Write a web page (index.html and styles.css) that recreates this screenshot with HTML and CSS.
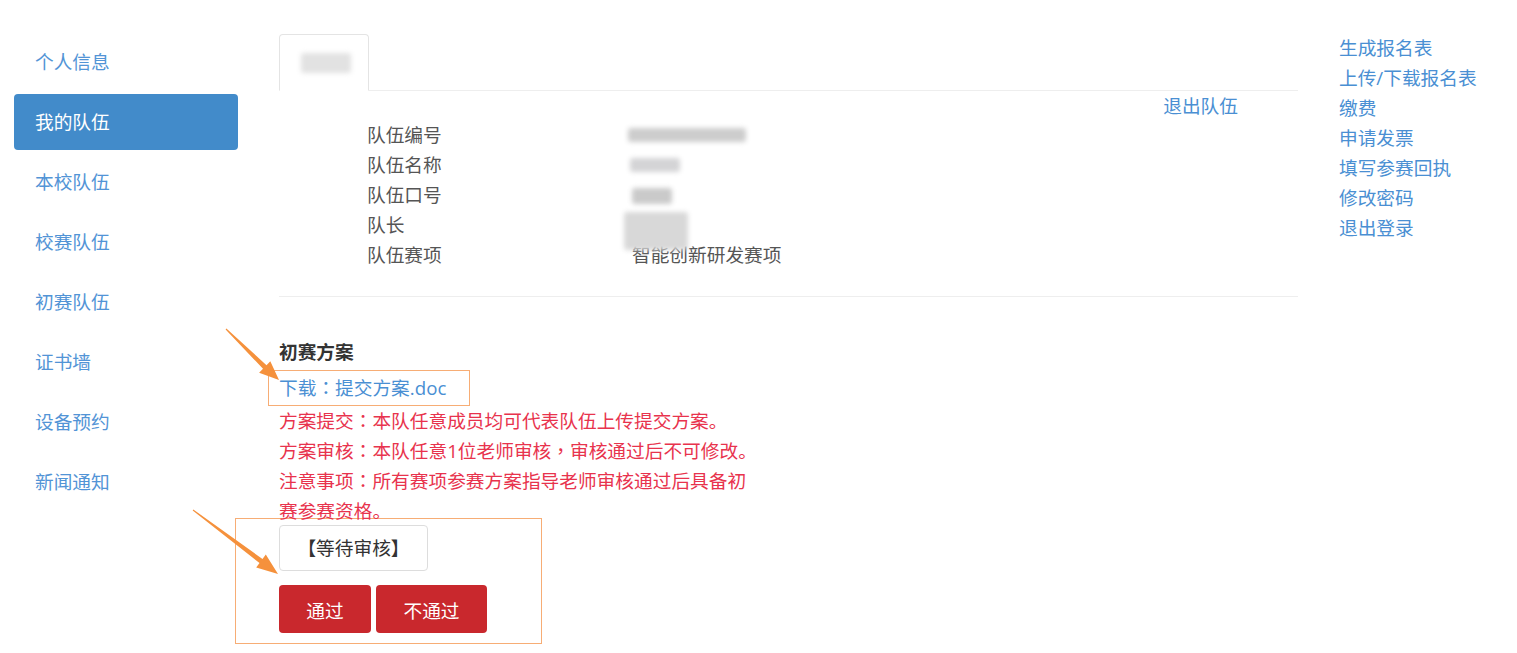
FILE: index.html
```html
<!DOCTYPE html>
<html lang="zh">
<head>
<meta charset="utf-8">
<title>我的队伍</title>
<link rel="stylesheet" href="styles.css">
</head>
<body>
<div class="page">
  <nav class="sidenav">
    <a class="nav-item">个人信息</a>
    <a class="nav-item active">我的队伍</a>
    <a class="nav-item">本校队伍</a>
    <a class="nav-item">校赛队伍</a>
    <a class="nav-item">初赛队伍</a>
    <a class="nav-item">证书墙</a>
    <a class="nav-item">设备预约</a>
    <a class="nav-item">新闻通知</a>
  </nav>

  <main class="main">
    <div class="tabs">
      <div class="tab"><span class="blur blur-tab"></span></div>
    </div>
    <div class="exit-row"><a class="link">退出队伍</a></div>
    <div class="info">
      <div class="info-row"><span class="label">队伍编号</span><span class="value"><span class="blur blur-1"></span></span></div>
      <div class="info-row"><span class="label">队伍名称</span><span class="value"><span class="blur blur-2"></span></span></div>
      <div class="info-row"><span class="label">队伍口号</span><span class="value"><span class="blur blur-3"></span></span></div>
      <div class="info-row"><span class="label">队长</span><span class="value"><span class="blur blur-4"></span></span></div>
      <div class="info-row"><span class="label">队伍赛项</span><span class="value">智能创新研发赛项</span></div>
    </div>
    <hr class="divider">
    <section class="plan">
      <h4 class="plan-title">初赛方案</h4>
      <a class="download">下载<span class="punct" lang="zh-Hant">：</span>提交方案.doc</a>
      <p class="notice">方案提交<span class="punct" lang="zh-Hant">：</span>本队任意成员均可代表队伍上传提交方案。<br>方案审核<span class="punct" lang="zh-Hant">：</span>本队任意1位老师审核<span class="punct" lang="zh-Hant">，</span>审核通过后不可修改。<br>注意事项<span class="punct" lang="zh-Hant">：</span>所有赛项参赛方案指导老师审核通过后具备初赛参赛资格。</p>
      <div class="review">
        <div class="status">【等待审核】</div>
        <div class="actions">
          <button class="btn btn-pass">通过</button>
          <button class="btn btn-fail">不通过</button>
        </div>
      </div>
    </section>
  </main>

  <aside class="side-links">
    <a class="link">生成报名表</a>
    <a class="link">上传/下载报名表</a>
    <a class="link">缴费</a>
    <a class="link">申请发票</a>
    <a class="link">填写参赛回执</a>
    <a class="link">修改密码</a>
    <a class="link">退出登录</a>
  </aside>
</div>

<svg class="arrows" width="1517" height="653" viewBox="0 0 1517 653">
  <polygon points="225.6,329.4 226.4,328.6 266.5,365.2 270.3,361.3 279,380 259.1,372.7 263,368.8" />
  <polygon points="192.7,510.4 193.3,509.6 262.5,559 265.8,554.6 278,574 256.2,567.4 259.5,563" />
</svg>
</body>
</html>
```

FILE: styles.css
```css
* { box-sizing: border-box; }
html, body { margin: 0; padding: 0; background: #fff; }
body {
  font-family: "Open Sans", "Noto Sans CJK SC", sans-serif;
  font-size: 18.7px;
  line-height: 30px;
  color: #555;
  position: relative;
  width: 1517px;
  height: 653px;
  overflow: hidden;
}
a { text-decoration: none; cursor: pointer; }
.link { color: #4a8fd3; }

.page {
  display: flex;
  align-items: flex-start;
  padding-left: 14px;
}

.sidenav {
  width: 224px;
  padding-top: 34px;
  display: flex;
  flex-direction: column;
  gap: 4px;
}
.nav-item {
  display: block;
  height: 56px;
  line-height: 56px;
  padding-left: 21px;
  color: #5294d6;
  border-radius: 4px;
}
.nav-item.active {
  background: #428bca;
  color: #fff;
}

.main {
  width: 1019px;
  margin-left: 41px;
  padding-top: 34px;
}
.tabs {
  border-bottom: 1px solid #eee;
  height: 57px;
}
.tab {
  width: 90px;
  height: 57px;
  border: 1px solid #e4e4e4;
  border-bottom: 1px solid #fff;
  border-radius: 4px 4px 0 0;
  background: #fff;
  padding-top: 18px;
  padding-left: 21px;
}
.blur {
  display: block;
  background: #cfcfcf;
  filter: blur(2.5px);
  border-radius: 3px;
}
.blur-tab { width: 50px; height: 20px; background: #e2e2e2; }
.blur-1 { width: 118px; height: 14px; margin-top: 8px; margin-left: -4px; background: #cdcdcd; }
.blur-2 { width: 50px; height: 14px; margin-top: 8px; margin-left: -2px; background: #d4d4d6; }
.blur-3 { width: 40px; height: 16px; margin-top: 8px; background: #cacaca; }
.blur-4 { width: 64px; height: 38px; margin-top: 2px; margin-left: -8px; background: #d8d8d8; }

.exit-row {
  text-align: right;
  padding-right: 60px;
  height: 30px;
}
.info {
  padding-left: 88px;
  margin-top: -1px;
}
.info-row {
  display: flex;
  height: 30px;
}
.label { width: 265px; flex: none; }
.value { color: #555; }

.divider {
  border: 0;
  border-top: 1px solid #eee;
  margin: 26px 0 0;
}

.plan { padding-top: 40px; }
.plan-title {
  margin: 0 0 3px;
  font-size: 18.7px;
  font-weight: bold;
  color: #333;
  line-height: 30px;
}
.download {
  display: block;
  width: 202px;
  height: 36px;
  margin-left: -11px;
  padding: 2px 0 2px 10px;
  border: 1px solid #f7ad75;
  color: #4a8fd3;
}
.punct {
  font-family: "Noto Sans CJK TC", sans-serif;
  line-height: 0;
}
.notice {
  margin: 0;
  max-width: 482px;
  color: #e8334d;
  line-height: 30px;
}
.review {
  width: 307px;
  margin-left: -44px;
  margin-top: -8px;
  padding: 6px 0 10px 43px;
  border: 1px solid #f7ad75;
}
.status {
  width: 149px;
  height: 46px;
  border: 1px solid #ddd;
  border-radius: 4px;
  color: #333;
  line-height: 44px;
  text-align: center;
}
.actions {
  display: flex;
  gap: 5px;
  margin-top: 14px;
}
.btn {
  height: 48px;
  border: 0;
  border-radius: 4px;
  background: #c9282d;
  color: #fff;
  font-family: inherit;
  font-size: 18.7px;
}
.btn-pass { width: 92px; }
.btn-fail { width: 111px; }

.side-links {
  margin-left: 41px;
  padding-top: 33px;
  display: flex;
  flex-direction: column;
}
.side-links .link { display: block; height: 30px; }

.arrows {
  position: absolute;
  left: 0;
  top: 0;
  pointer-events: none;
}
.arrows polygon { fill: #f5913c; }
```
